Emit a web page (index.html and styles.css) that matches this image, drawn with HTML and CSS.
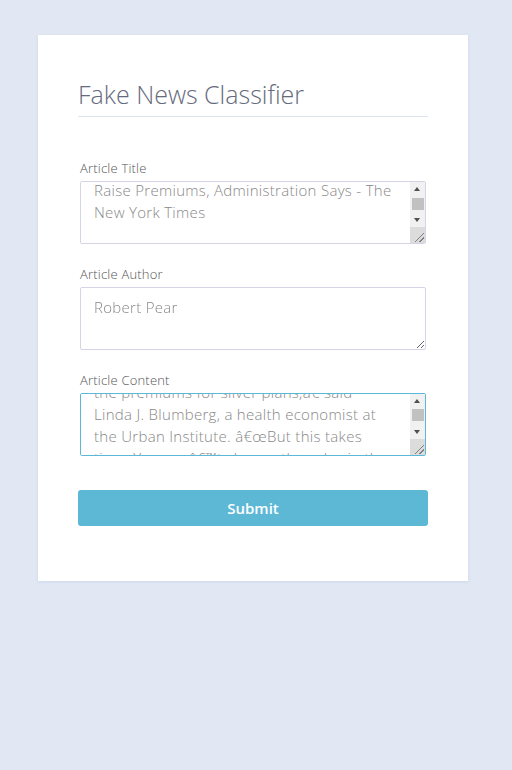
FILE: index.html
```html
<!DOCTYPE html>
<html>
<head>
<meta charset="utf-8">
<link rel="stylesheet" href="styles.css">
</head>
<body>
<main class="card">
  <h1 class="title">Fake News Classifier</h1>
  <form class="form">
    <div class="group">
      <label class="label">Article Title</label>
      <div class="field-wrap">
        <textarea class="field field-scroll" id="f-title">Trump Administration Moves to
Raise Premiums, Administration Says - The
New York Times
</textarea>
        <div class="scrollbar" aria-hidden="true">
          <span class="sb-btn sb-up"></span>
          <span class="sb-track"><span class="sb-thumb sb-thumb-title"></span></span>
          <span class="sb-btn sb-down"></span>
          <span class="sb-corner"></span>
        </div>
      </div>
    </div>
    <div class="group">
      <label class="label">Article Author</label>
      <div class="field-wrap">
        <textarea class="field">Robert Pear</textarea>
      </div>
    </div>
    <div class="group">
      <label class="label">Article Content</label>
      <div class="field-wrap">
        <textarea class="field field-scroll field-active" id="f-content">WASHINGTON — Insurers said
they would raise prices,
and that could raise
the premiums for silver plans,â€ said
Linda J. Blumberg, a health economist at
the Urban Institute. â€œBut this takes
time. You canâ€™t change the rules in the
middle of the game without
consequences, she said, adding that
consumers would be left with fewer
choices next year.</textarea>
        <div class="scrollbar" aria-hidden="true">
          <span class="sb-btn sb-up"></span>
          <span class="sb-track"><span class="sb-thumb sb-thumb-content"></span></span>
          <span class="sb-btn sb-down"></span>
          <span class="sb-corner"></span>
        </div>
      </div>
    </div>
    <button type="button" class="submit">Submit</button>
  </form>
</main>
<script src="script.js"></script>
</body>
</html>
```

FILE: styles.css
```css
html, body {
  margin: 0;
  padding: 0;
}
body {
  background: #e1e8f4;
  font-family: "Open Sans", "Liberation Sans", sans-serif;
  min-height: 770px;
}
.card {
  width: 430px;
  box-sizing: border-box;
  margin: 35px 0 0 38px;
  background: #fff;
  padding: 42px 40px 55px;
  box-shadow: 0 1px 3px rgba(120, 140, 170, 0.18);
}
.title {
  margin: 0;
  font-weight: 300;
  font-size: 25px;
  line-height: 34px;
  color: #666b7c;
  padding-bottom: 5px;
  border-bottom: 1px solid #dde3ec;
}
.form {
  display: flex;
  flex-direction: column;
  padding-top: 42px;
}
.group {
  display: flex;
  flex-direction: column;
  gap: 4px;
  margin: 0 2px 21px;
}
.label {
  font-size: 13px;
  letter-spacing: 0.2px;
  line-height: 18px;
  font-weight: 300;
  color: #555;
}
.field-wrap {
  position: relative;
  display: flex;
}
.field {
  box-sizing: border-box;
  display: block;
  height: 63px;
  width: 100%;
  margin: 0;
  border: 1px solid #d5d3e6;
  border-radius: 2px;
  padding: 8px 13px;
  font-family: "Open Sans", "Liberation Sans", sans-serif;
  font-weight: 300;
  font-size: 15px;
  letter-spacing: 0.3px;
  line-height: 22px;
  color: #888;
  background: #fff;
  outline: none;
  overflow-y: auto;
}
.field-scroll {
  padding-right: 28px;
}
.field-active {
  border-color: #5bb8d8;
}
.scrollbar {
  position: absolute;
  top: 1px;
  right: 1px;
  bottom: 1px;
  width: 15px;
  display: flex;
  flex-direction: column;
  background: #f1f1f1;
  pointer-events: none;
}
.sb-btn {
  height: 14px;
  flex: none;
  position: relative;
}
.sb-btn::after {
  content: "";
  position: absolute;
  left: 4px;
  width: 0;
  height: 0;
  border-left: 3.5px solid transparent;
  border-right: 3.5px solid transparent;
}
.sb-up::after {
  top: 5px;
  border-bottom: 4px solid #505050;
}
.sb-down::after {
  top: 5px;
  border-top: 4px solid #505050;
}
.sb-track {
  flex: 1;
  display: flex;
  flex-direction: column;
}
.sb-thumb {
  height: 12px;
  margin: 0 1px 0 2px;
  background: #c1c1c1;
}
.sb-thumb-title {
  margin-top: 2px;
}
.sb-thumb-content {
  margin-top: 1px;
}
.sb-corner {
  height: 16px;
  flex: none;
  background-color: #dcdcdc;
  background-image: linear-gradient(to bottom right,
    transparent 0 60%, #808080 60% 66%, transparent 66% 78%, #808080 78% 84%, transparent 84%);
  background-size: 12px 12px;
  background-position: right 1px bottom 1px;
  background-repeat: no-repeat;
}
.submit {
  margin-top: 13px;
  height: 36px;
  border: none;
  border-radius: 3px;
  background: #5db8d6;
  color: #fff;
  font-family: "Open Sans", "Liberation Sans", sans-serif;
  font-weight: 600;
  font-size: 15px;
  cursor: pointer;
}
```

FILE: script.js
```js
document.getElementById('f-title').scrollTop = 33;
document.getElementById('f-content').scrollTop = 8 + 22 * 3 + 13;
```
